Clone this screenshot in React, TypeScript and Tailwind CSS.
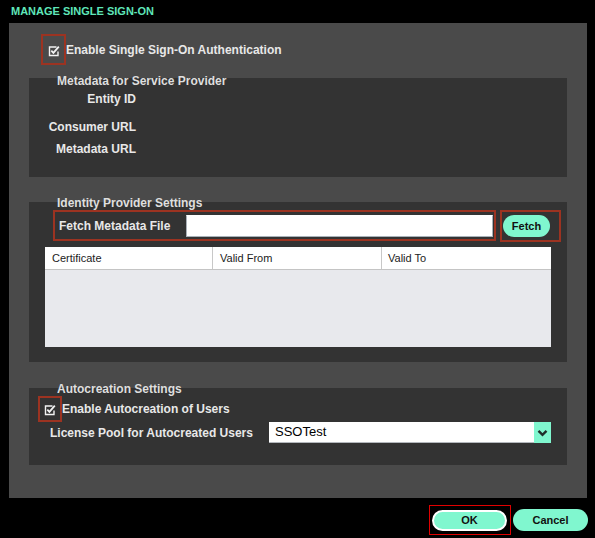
import React from 'react';

const CheckIcon: React.FC = () => (
  <svg width="12" height="12" viewBox="0 0 12 12">
    <path d="M8.5 2 H1.5 V10.5 H10 V6.5" fill="none" stroke="#f2f2f2" strokeWidth="1.4" />
    <path d="M3.3 5.6 L5.4 7.8 L10.8 1.6" fill="none" stroke="#f2f2f2" strokeWidth="1.8" />
  </svg>
);

const App: React.FC = () => {
  return (
    <div className="w-[595px] h-[538px] bg-black font-['Liberation_Sans',Arial,sans-serif] text-[#e8e8e8]">
      {/* Title */}
      <div className="h-[23px] pl-[11px] pt-[5px] text-[11px] leading-[13px] font-bold text-[#5fe6b9]">
        MANAGE SINGLE SIGN-ON
      </div>

      {/* Panel */}
      <div className="ml-[9px] w-[578px] h-[475px] bg-[#4a4a4a] flex flex-col">
        <div className="mt-[11px] ml-[32px] flex items-center">
          <div className="w-[25px] h-[31px] border-2 border-[#9c3321] flex items-center justify-center pt-[3px]">
            <CheckIcon />
          </div>
          <span className="text-[12px] font-bold leading-[14px]">Enable Single Sign-On Authentication</span>
        </div>

        {/* Metadata for Service Provider */}
        <div className="mt-[13px] ml-[20px] w-[538px] h-[99px] bg-[#333333] flex flex-col">
          <div className="-mt-[4px] pl-[28px] text-[12px] font-bold leading-[14px] text-[#dedede]">
            Metadata for Service Provider
          </div>
          <div className="w-[107px] text-right text-[12px] font-bold leading-[14px] mt-[4px]">Entity ID</div>
          <div className="w-[107px] text-right text-[12px] font-bold leading-[14px] mt-[14px]">Consumer URL</div>
          <div className="w-[107px] text-right text-[12px] font-bold leading-[14px] mt-[8px]">Metadata URL</div>
        </div>

        {/* Identity Provider Settings */}
        <div className="mt-[25px] ml-[20px] w-[538px] h-[160px] bg-[#333333] flex flex-col">
          <div className="-mt-[6px] pl-[28px] text-[12px] font-bold leading-[14px] text-[#dedede]">
            Identity Provider Settings
          </div>
          <div className="ml-[24px] flex items-start">
            <div className="w-[443px] h-[31px] border-2 border-[#9c3321] flex items-center">
              <span className="w-[131px] pl-[4px] text-[12px] font-bold leading-[14px]">Fetch Metadata File</span>
              <div className="w-[307px] h-[22px] bg-white border border-[#a9b0b7] border-t-white" />
            </div>
            <div className="ml-[4px] w-[61px] h-[32px] border-2 border-[#9c3321] pl-[1px] pt-[3px] flex items-start">
              <button className="w-[47px] h-[22px] rounded-full bg-[#80f7cf] text-[11px] font-bold text-[#111] leading-[22px] flex items-center justify-center">
                Fetch
              </button>
            </div>
          </div>
          <div className="mt-[5px] ml-[16px] w-[506px] h-[100px] bg-[#e8e9ed] flex flex-col">
            <div className="h-[23px] bg-white border-b border-[#c4c4c4] grid grid-cols-[168px_169px_169px] text-[11px] text-[#222] leading-[22px]">
              <div className="pl-[7px] border-r border-[#c8c8c8]">Certificate</div>
              <div className="pl-[7px] border-r border-[#c8c8c8]">Valid From</div>
              <div className="pl-[6px]">Valid To</div>
            </div>
          </div>
        </div>

        {/* Autocreation Settings */}
        <div className="mt-[26px] ml-[20px] w-[538px] h-[77px] bg-[#333333] flex flex-col">
          <div className="-mt-[6px] pl-[28px] text-[12px] font-bold leading-[14px] text-[#dedede]">
            Autocreation Settings
          </div>
          <div className="ml-[9px] flex items-center">
            <div className="w-[24px] h-[26px] border-2 border-[#9c3321] flex items-center justify-center pt-[1px]">
              <CheckIcon />
            </div>
            <span className="text-[12px] font-bold leading-[14px]">Enable Autocreation of Users</span>
          </div>
          <div className="ml-[21px] flex items-center">
            <span className="w-[219px] text-[12px] font-bold leading-[14px]">License Pool for Autocreated Users</span>
            <div className="flex h-[21px]">
              <div className="w-[265px] h-[21px] bg-white border-b border-[#b4b8bd] pl-[6px] text-[13px] leading-[20px] text-black">
                SSOTest
              </div>
              <div className="w-[17px] h-[21px] bg-[#80f7cf] flex items-center justify-center">
                <svg width="11" height="8" viewBox="0 0 11 8">
                  <path d="M1.5 1.8 L5.5 5.8 L9.5 1.8" fill="none" stroke="#1f2f2a" strokeWidth="2.4" />
                </svg>
              </div>
            </div>
          </div>
        </div>
      </div>

      {/* Buttons */}
      <div className="mt-[7px] pr-[7px] flex justify-end items-start">
        <div className="w-[82px] h-[30px] border border-[#e00000] pl-[2px] pt-[4px] flex items-start">
          <button className="w-[75px] h-[21px] rounded-full bg-[#80f7cf] border-2 border-white text-[11px] font-bold text-[#111] flex items-center justify-center">
            OK
          </button>
        </div>
        <button className="ml-[2px] mt-[4px] w-[75px] h-[22px] rounded-full bg-[#80f7cf] text-[11px] font-bold text-[#111] flex items-center justify-center">
          Cancel
        </button>
      </div>
    </div>
  );
};

export default App;
